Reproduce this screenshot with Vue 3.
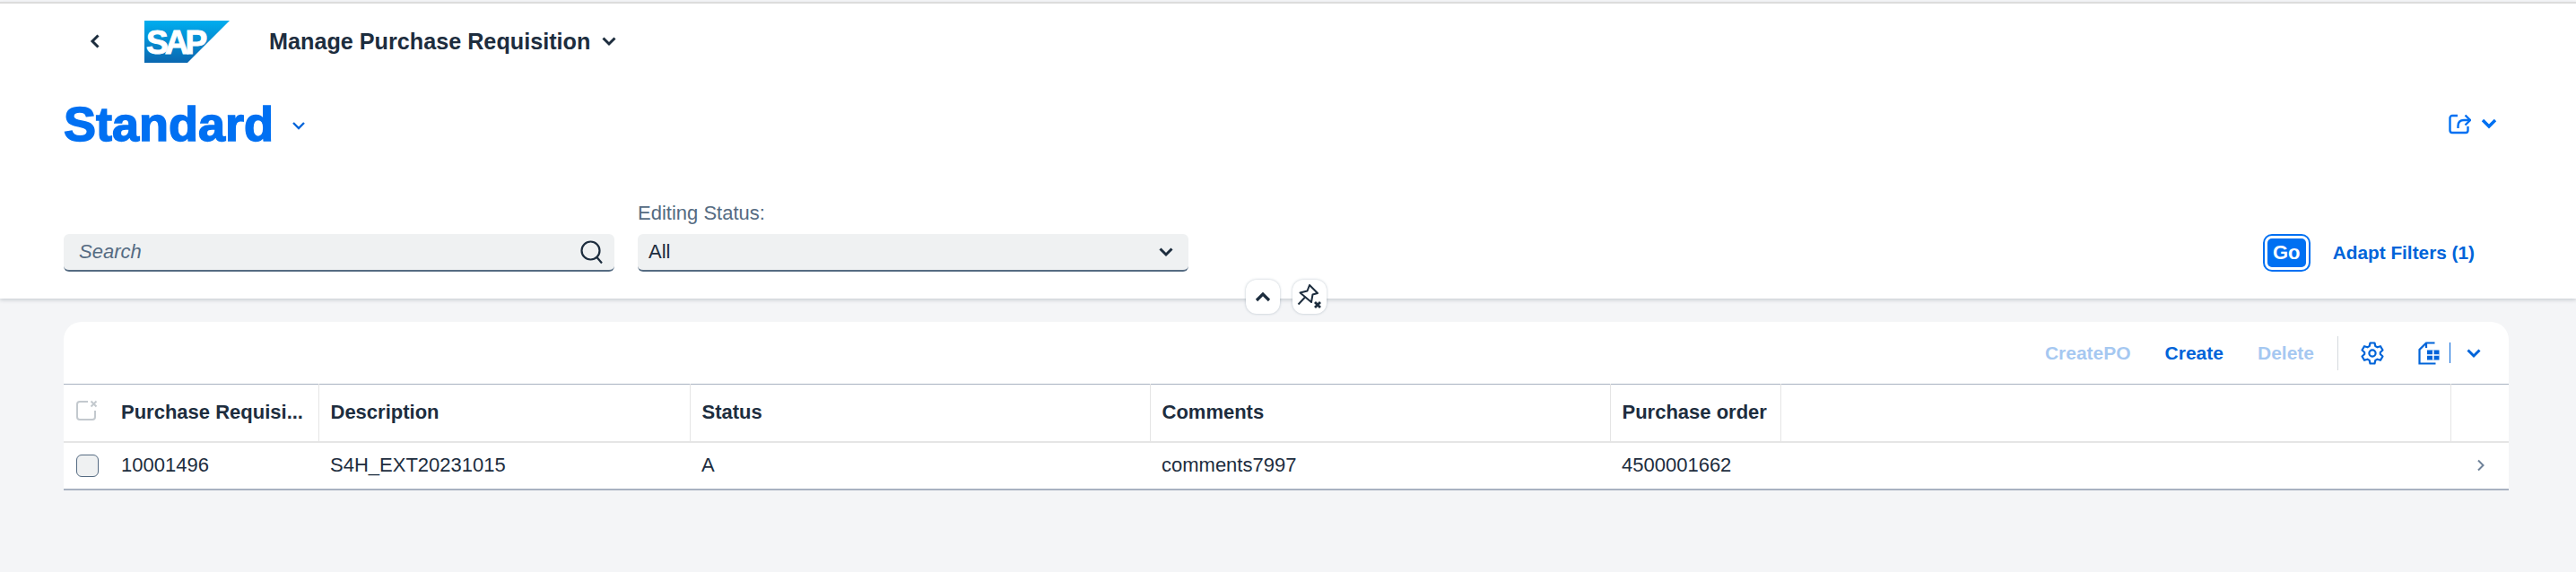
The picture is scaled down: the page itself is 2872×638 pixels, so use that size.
<template>
  <div class="page">
    <header class="header">
      <div class="shell-bar">
        <button class="back-btn">
          <svg width="14" height="20" viewBox="0 0 14 20"><path d="M10.5 3.5 4 10l6.5 6.5" class="stroke" stroke-width="3" /></svg>
        </button>
        <svg class="logo" width="95" height="47" viewBox="0 0 95 47">
          <defs>
            <linearGradient id="sapGrad" x1="0" y1="0" x2="0" y2="1">
              <stop offset="0" stop-color="#00aeef" />
              <stop offset="1" stop-color="#0a67b0" />
            </linearGradient>
          </defs>
          <polygon points="0,0 95,0 48,47 0,47" fill="url(#sapGrad)" />
          <text x="2" y="37" class="logo-text">SAP</text>
        </svg>
        <span class="app-title">{{ appTitle }}</span>
        <svg class="app-chevron" width="18" height="12" viewBox="0 0 18 12"><path d="M2.5 2.5 9 9l6.5-6.5" class="stroke" stroke-width="3" /></svg>
      </div>

      <div class="title-row">
        <h1 class="variant">Standard</h1>
        <svg class="variant-chevron" width="16" height="10" viewBox="0 0 16 10"><path d="M2 2l6 6 6-6" fill="none" stroke="#0064d9" stroke-width="2.4" /></svg>
        <div class="share">
          <svg width="25" height="24" viewBox="0 0 25 24" fill="none" stroke="#0070f2" stroke-width="2.4">
            <path d="M10 3H4a2.500 2.500 0 0 0-2.500 2.500v14A2.500 2.500 0 0 0 4 22h15a2.500 2.500 0 0 0 2.500-2.500V15" />
            <path d="M10.500 17v-2.500c0-4 2.500-6.500 6.500-6.500h6" />
            <path d="M18.500 2.500 24 8l-5.500 5.500" />
          </svg>
          <svg width="18" height="12" viewBox="0 0 18 12"><path d="M2 2l7 7 7-7" fill="none" stroke="#0070f2" stroke-width="3.400" /></svg>
        </div>
      </div>

      <div class="filter-row">
        <div class="search field">
          <span class="placeholder">Search</span>
          <svg width="28" height="28" viewBox="0 0 28 28" fill="none" stroke="#1d2d3e" stroke-width="2.200">
            <circle cx="12.500" cy="12.500" r="10" />
            <path d="M19.500 20 25 26.500" />
          </svg>
        </div>
        <div class="filter-item">
          <label class="filter-label">Editing Status:</label>
          <div class="select field">
            <span>All</span>
            <svg width="18" height="12" viewBox="0 0 18 12"><path d="M2.500 2.500 9 9l6.500-6.500" class="stroke" stroke-width="3" /></svg>
          </div>
        </div>
        <div class="filter-actions">
          <button class="go-btn"><span>Go</span></button>
          <button class="adapt-btn">Adapt Filters (1)</button>
        </div>
      </div>

      <!-- sit on the header's bottom edge -->
      <div class="header-toggles">
        <button class="round-btn">
          <svg width="18" height="12" viewBox="0 0 18 12"><path d="M2 10l7-7 7 7" class="stroke" stroke-width="3.200" /></svg>
        </button>
        <button class="round-btn">
          <svg width="28" height="30" viewBox="0 0 28 30" fill="none" stroke="#1d2d3e" stroke-width="2">
            <path d="M14 2 23 11 17.500 12.500 16 21 3.500 10.500 11.500 8.500Z" stroke-linejoin="round" />
            <path d="M9 15.500 1.500 23.500" />
            <path d="M20 21l6 6M26 21l-6 6" stroke-width="2.800" />
          </svg>
        </button>
      </div>
    </header>

    <section class="card">
      <div class="toolbar">
        <button class="tool-btn disabled">CreatePO</button>
        <button class="tool-btn">Create</button>
        <button class="tool-btn disabled">Delete</button>
        <span class="tool-sep"></span>
        <svg class="gear" width="26" height="26" viewBox="0 0 26 26" fill="none" stroke="#0064d9" stroke-width="2.200" stroke-linejoin="round">
          <path d="M10.500 1.500h5l.8 3.600 2.200 1.200 3.500-1.100 2.500 4.300-2.700 2.500v2l2.700 2.500-2.500 4.300-3.500-1.100-2.200 1.200-.8 3.600h-5l-.8-3.600-2.200-1.200-3.500 1.100L1.500 16.500 4.200 14v-2L1.500 9.500 4 5.200l3.500 1.100 2.200-1.200Z" />
          <circle cx="13" cy="13" r="3.600" />
        </svg>
        <svg class="table-icon" width="25" height="26" viewBox="0 0 25 26" fill="none" stroke="#0064d9" stroke-width="2.200">
          <path d="M18.500 1.500H9L1.500 9v15.500h18" />
          <path d="M9 1.500V7" />
          <rect x="10" y="9.500" width="13.500" height="11" fill="#0064d9" stroke="none" />
          <path d="M16.800 9.500v11M10 15h13.500" stroke="#fff" stroke-width="1.600" />
        </svg>
        <span class="tool-divider"></span>
        <svg class="tool-chevron" width="16" height="12" viewBox="0 0 16 12"><path d="M1.500 2.500 8 9l6.500-6.500" fill="none" stroke="#0064d9" stroke-width="3" /></svg>
      </div>

      <table class="grid">
        <colgroup>
          <col v-for="w in colWidths" :key="w.id" :width="w.px" />
        </colgroup>
        <thead>
          <tr>
            <th class="sel-cell no-sep">
              <svg width="24" height="23" viewBox="0 0 24 23" fill="none" stroke="#c3c9ce" stroke-width="2">
                <path d="M13 2H4a3 3 0 0 0-3 3v14a3 3 0 0 0 3 3h14a3 3 0 0 0 3-3v-7" />
                <path d="M16.500 1.500l6 6M22.500 1.500l-6 6" />
              </svg>
            </th>
            <th v-for="col in columns" :key="col">{{ col }}</th>
            <th class="blank"></th>
            <th class="no-sep"></th>
          </tr>
        </thead>
        <tbody>
          <tr v-for="row in rows" :key="row.id">
            <td class="sel-cell"><span class="checkbox"></span></td>
            <td>{{ row.id }}</td>
            <td>{{ row.description }}</td>
            <td>{{ row.status }}</td>
            <td>{{ row.comments }}</td>
            <td>{{ row.order }}</td>
            <td></td>
            <td class="nav-cell">
              <svg width="10" height="14" viewBox="0 0 10 14"><path d="M2 1.500 7.500 7 2 12.500" fill="none" stroke="#6f8299" stroke-width="2" /></svg>
            </td>
          </tr>
        </tbody>
      </table>
    </section>
  </div>
</template>

<script setup>
const appTitle = 'Manage Purchase Requisition'

const colWidths = [
  { id: 'sel', px: 64 },
  { id: 'pr', px: 220 },
  { id: 'desc', px: 414 },
  { id: 'status', px: 513 },
  { id: 'comments', px: 513 },
  { id: 'po', px: 190 },
  { id: 'blank', px: 747 },
  { id: 'nav', px: 65 },
]

const columns = ['Purchase Requisi...', 'Description', 'Status', 'Comments', 'Purchase order']

const rows = [
  { id: '10001496', description: 'S4H_EXT20231015', status: 'A', comments: 'comments7997', order: '4500001662' },
]
</script>

<style>
html,
body {
  background: #f4f5f7;
}
</style>

<style scoped>
.page {
  min-height: 638px;
  background: #f4f5f7;
  font-family: "Liberation Sans", Arial, sans-serif;
  color: #1d2d3e;
  overflow: hidden;
}
button {
  border: none;
  background: none;
  padding: 0;
  font-family: inherit;
  cursor: pointer;
}
.stroke {
  fill: none;
  stroke: #1d2d3e;
}
.header {
  position: relative;
  height: 331px;
  box-sizing: border-box;
  background: #fff;
  border-top: 2px solid #dcdcdc;
  margin-top: 2px;
  box-shadow: 0 2px 4px rgba(29, 45, 62, 0.18);
}
.shell-bar {
  display: flex;
  align-items: center;
  height: 66px;
  padding: 18px 0 0 99px;
  box-sizing: border-box;
}
.back-btn {
  display: flex;
  width: 14px;
  margin-right: 48px;
}
.app-title {
  margin-left: 44px;
  font-size: 25.2px;
  font-weight: 700;
}
.logo-text {
  font-family: "Liberation Sans", Arial, sans-serif;
  font-size: 37px;
  font-weight: 700;
  fill: #fff;
  stroke: #fff;
  stroke-width: 1px;
  letter-spacing: -4px;
}
.app-chevron {
  margin-left: 12px;
}
.title-row {
  display: flex;
  align-items: center;
  height: 72px;
  padding: 0 88px 0 71px;
  margin-top: 32px;
}
.variant {
  margin: 0;
  font-size: 54px;
  font-weight: 700;
  color: #0070f2;
  -webkit-text-stroke: 1.5px #0070f2;
}
.variant-chevron {
  margin-left: 20px;
  margin-top: 4px;
}
.share {
  display: flex;
  align-items: center;
  gap: 11px;
  margin-left: auto;
}
.filter-row {
  display: flex;
  align-items: flex-end;
  gap: 26px;
  height: 101px;
  padding: 0 113px 0 71px;
  margin-top: 28px;
}
.field {
  display: flex;
  align-items: center;
  justify-content: space-between;
  height: 42px;
  box-sizing: border-box;
  background: #eff1f2;
  border-radius: 6px;
  border-bottom: 2px solid #556b82;
}
.search {
  width: 614px;
  padding: 0 11px 0 17px;
}
.placeholder {
  font-size: 22px;
  font-style: italic;
  color: #556b82;
}
.filter-item {
  display: flex;
  flex-direction: column;
  gap: 10px;
}
.filter-label {
  font-size: 22px;
  color: #556b82;
}
.select {
  width: 614px;
  padding: 0 16px 0 12px;
  font-size: 22px;
}
.filter-actions {
  display: flex;
  align-items: center;
  gap: 25px;
  margin-left: auto;
  height: 42px;
}
.go-btn {
  width: 53px;
  height: 42px;
  box-sizing: border-box;
  border: 2px solid #0070f2;
  border-radius: 10px;
  padding: 3px;
}
.go-btn span {
  display: block;
  height: 100%;
  line-height: 32px;
  background: #0070f2;
  border-radius: 5px;
  color: #fff;
  font-size: 22px;
  font-weight: 700;
}
.adapt-btn {
  color: #0064d9;
  font-size: 20.8px;
  font-weight: 700;
}
.header-toggles {
  position: absolute;
  left: 1389px;
  top: 308px;
  display: flex;
  gap: 14px;
}
.round-btn {
  display: flex;
  align-items: center;
  justify-content: center;
  width: 38px;
  height: 38px;
  background: #fff;
  border-radius: 12px;
  box-shadow: 0 0 3px rgba(85, 107, 130, 0.4);
}
.card {
  margin: 26px 75px 0 71px;
  background: #fff;
  border-radius: 20px 20px 0 0;
}
.toolbar {
  display: flex;
  align-items: center;
  height: 69px;
  justify-content: flex-end;
  color: #0064d9;
}
.tool-btn {
  margin-right: 38px;
  font-size: 21px;
  font-weight: 700;
  color: #0064d9;
}
.tool-btn.disabled {
  opacity: 0.35;
}
.tool-btn:nth-child(3) {
  margin-right: 26px;
}
.tool-sep {
  width: 1px;
  height: 38px;
  background: #d5dadd;
  margin-right: 25px;
}
.gear {
  margin-right: 38px;
}
.tool-divider {
  width: 1px;
  height: 23px;
  background: #0064d9;
  margin: 0 18px 0 10px;
}
.tool-chevron {
  margin-right: 31px;
}
.grid {
  width: 2726px;
  table-layout: fixed;
  border-collapse: collapse;
  border-top: 1px solid #a8b2c1;
  border-bottom: 2px solid #a8b2c1;
  font-size: 22px;
}
th {
  height: 64px;
  padding: 0 13px;
  box-sizing: border-box;
  text-align: left;
  font-weight: 700;
  white-space: nowrap;
  overflow: hidden;
  border-right: 1px solid #e5e5e5;
  border-bottom: 2px solid #e5e5e5;
}
th:nth-child(2) {
  padding-left: 0;
}
th.no-sep:first-child {
  border-right: none;
}
th:last-child {
  border-right: none;
}
td {
  height: 53px;
  padding: 0 13px;
  box-sizing: border-box;
}
td:nth-child(2) {
  padding-left: 0;
}
.sel-cell {
  padding: 0 0 0 14px;
}
th.sel-cell svg {
  display: block;
  margin-top: -5px;
}
.checkbox {
  display: block;
  width: 25px;
  height: 25px;
  box-sizing: border-box;
  background: #eff1f2;
  border: 1.500px solid #556b82;
  border-radius: 6px;
}
.nav-cell {
  padding: 0 0 0 29px;
}
.nav-cell svg {
  display: block;
}
</style>
